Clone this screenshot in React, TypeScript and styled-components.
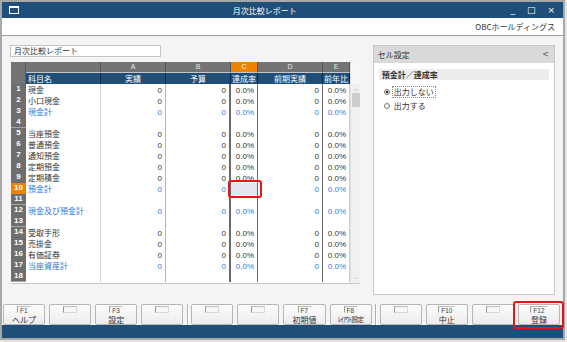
import styled, { createGlobalStyle } from "styled-components";

const GlobalStyle = createGlobalStyle`
  html, body {
    margin: 0;
    padding: 0;
    background: #e4e4e4;
  }
  body {
    font-family: "Noto Sans CJK JP", "Noto Sans", sans-serif;
    font-size: 8px;
    color: #333;
  }
  * { box-sizing: border-box; }
`;

const Window = styled.div`
  width: 565px;
  height: 340px;
  border: 2px solid #a8a8a8;
  display: flex;
  flex-direction: column;
  background: #f4f4f4;
`;

const TitleBar = styled.div`
  height: 16px;
  background: #1f4e79;
  color: #fff;
  display: flex;
  align-items: center;
  position: relative;
  padding: 0 6px;

  .title {
    flex: 1;
    text-align: center;
    font-size: 8px;
  }
`;

const WinIcon = styled.span`
  width: 10px;
  height: 8px;
  border: 1px solid #fff;
  border-top-width: 2px;
  margin-left: 1px;
`;

const WinControls = styled.div`
  display: flex;
  gap: 12px;
  align-items: center;
  font-size: 9px;
  font-family: "DejaVu Sans", sans-serif;
  padding-right: 2px;
`;

const CompanyBar = styled.div`
  height: 18px;
  background: #fff;
  border-bottom: 1px solid #9c9c9c;
  display: flex;
  align-items: center;
  justify-content: flex-end;
  padding-right: 8px;
  font-size: 8px;
  color: #333;
`;

const Body = styled.div`
  flex: 1;
  display: flex;
  padding: 9px 8px 0 8px;
  gap: 12px;
`;

const LeftCol = styled.div`
  display: flex;
  flex-direction: column;
  gap: 5px;
  width: 352px;
`;

const ReportName = styled.div`
  width: 151px;
  height: 12px;
  background: #fff;
  border: 1px solid #c4c4c4;
  padding-left: 3px;
  line-height: 10px;
  font-size: 8px;
`;

const GridFrame = styled.div`
  margin-left: 1px;
  width: 349px;
  height: 221px;
  display: flex;
  background: #fff;
  box-shadow: 0 1px 0 #c8c8c8;
`;

const Table = styled.div`
  width: 339px;
  display: flex;
  flex-direction: column;
`;

const COLS = "15px 75px 65px 65px 27px 65px 27px";

const HeaderGrid = styled.div`
  display: grid;
  grid-template-columns: ${COLS};
  grid-template-rows: 11px 11px;
`;

const Corner = styled.div`
  grid-row: span 2;
  background: #737373;
  border-right: 1px solid #5a5a5a;
`;

const LetterCell = styled.div<{ $active?: boolean }>`
  background: ${(p) => (p.$active ? "#ef8200" : "#747474")};
  color: ${(p) => (p.$active ? "#fff" : "#e8e8e8")};
  border-right: 1px solid #555;
  border-bottom: 1px solid #c8c8c8;
  font-family: "Liberation Sans", sans-serif;
  font-size: 7px;
  line-height: 10px;
  text-align: center;
`;

const TitleCell = styled.div<{ $left?: boolean }>`
  background: #1f4e79;
  color: #fff;
  border-right: 1px solid #0e2d4b;
  font-size: 8px;
  line-height: 11px;
  text-align: ${(p) => (p.$left ? "left" : "center")};
  padding-left: ${(p) => (p.$left ? "2px" : "0")};
  white-space: nowrap;
`;

const RowGrid = styled.div`
  display: grid;
  grid-template-columns: ${COLS};
  height: 11px;
`;

const NoCell = styled.div<{ $active?: boolean }>`
  background: ${(p) => (p.$active ? "#ef8200" : "#6e6e6e")};
  color: #fff;
  border-bottom: 1px solid #a3a3a3;
  font-family: "Liberation Sans", sans-serif;
  font-weight: bold;
  font-size: 8px;
  line-height: 10px;
  text-align: center;
`;

const DataCell = styled.div<{ $line: string; $w?: number; $right?: boolean; $blue?: boolean; $sel?: boolean }>`
  position: relative;
  border-right: ${(p) => p.$w ?? 1}px solid ${(p) => p.$line};
  background: ${(p) => (p.$sel ? "#e4e4ec" : "transparent")};
  color: ${(p) => (p.$blue ? "#2f7ae0" : "#333")};
  text-align: ${(p) => (p.$right ? "right" : "left")};
  padding: ${(p) => (p.$right ? "0 3px 0 0" : "0 0 0 2px")};
  font-size: 8px;
  line-height: 11px;
  white-space: nowrap;
`;

const NumText = styled.span`
  font-family: "Liberation Sans", sans-serif;
  font-size: 8px;
`;

const RedBox = styled.span<{ $t: number; $r: number; $b: number; $l: number }>`
  position: absolute;
  top: ${(p) => p.$t}px;
  right: ${(p) => p.$r}px;
  bottom: ${(p) => p.$b}px;
  left: ${(p) => p.$l}px;
  border: 2px solid #e8141a;
  border-radius: 3px;
  pointer-events: none;
  z-index: 2;
`;

const ScrollCol = styled.div`
  width: 10px;
  display: flex;
  flex-direction: column;
  background: #f0f0f0;
  border-left: 1px solid #e0e0e0;

  .head {
    height: 22px;
    background: #f6f6f6;
  }
  .track {
    flex: 1;
    display: flex;
    flex-direction: column;
    align-items: center;
  }
  .arrow {
    height: 9px;
    font-size: 6px;
    color: #a0a0a0;
    line-height: 9px;
    font-family: "DejaVu Sans", sans-serif;
  }
  .thumb {
    width: 8px;
    height: 14px;
    background: #cdcdcd;
  }
  .fill {
    flex: 1;
  }
`;

const Panel = styled.div`
  width: 183px;
  height: 250px;
  background: #fff;
  border: 1px solid #c8c8c8;
  display: flex;
  flex-direction: column;
`;

const PanelHead = styled.div`
  height: 17px;
  background: #d9d9d9;
  display: flex;
  align-items: center;
  justify-content: space-between;
  padding: 0 5px 0 4px;
  font-size: 8px;

  .chev {
    font-family: "DejaVu Sans", sans-serif;
    font-size: 8px;
    color: #555;
  }
`;

const PanelBody = styled.div`
  padding: 6px 5px;
  display: flex;
  flex-direction: column;
`;

const SectionTitle = styled.div`
  height: 11px;
  background: #ededed;
  font-size: 8px;
  font-weight: bold;
  line-height: 11px;
  padding-left: 3px;
  margin-bottom: 5px;
`;

const RadioRow = styled.div`
  display: flex;
  align-items: center;
  height: 14px;
  padding-left: 5px;
  gap: 2px;
`;

const RadioDot = styled.span<{ $on?: boolean }>`
  width: 6px;
  height: 6px;
  border-radius: 50%;
  border: 1px solid #777;
  background: ${(p) => (p.$on ? "radial-gradient(circle, #222 0 1.4px, #fff 1.6px)" : "#fff")};
`;

const RadioLabel = styled.span<{ $focus?: boolean }>`
  font-size: 8px;
  line-height: 10px;
  padding: 0 1px;
  border: 1px ${(p) => (p.$focus ? "dotted #888" : "solid transparent")};
`;

const FuncBar = styled.div`
  height: 24px;
  display: flex;
  align-items: flex-end;
  padding: 0 3px 0 1px;
`;

const KeyGroup = styled.div`
  flex: 1;
  display: flex;
  gap: 4px;
  height: 21px;
`;

const GroupDivider = styled.div`
  width: 8px;
  height: 21px;
  display: flex;
  justify-content: center;
  &::before {
    content: "";
    width: 1px;
    background: #b0b0b0;
    box-shadow: 1px 0 0 #fff;
  }
`;

const Key = styled.div`
  flex: 1;
  position: relative;
  border: 1px solid #b6b6b6;
  border-radius: 2px;
  background: linear-gradient(#fcfcfc, #ececec);
  display: flex;
  flex-direction: column;
  align-items: center;
  padding-top: 1px;
`;

const KeyTag = styled.span<{ $blank?: boolean }>`
  height: 7px;
  min-width: 14px;
  padding: 0 2px;
  font-family: "Liberation Sans", sans-serif;
  font-size: 6.5px;
  line-height: 7px;
  color: #444;
  border-left: 1px solid #999;
  border-top: 1px solid #bbb;
  border-right: 1px solid ${(p) => (p.$blank ? "#d8d8d8" : "transparent")};
  border-bottom: 1px solid ${(p) => (p.$blank ? "#d8d8d8" : "transparent")};
  background: ${(p) => (p.$blank ? "#f7f7f7" : "transparent")};
`;

const KeyLabel = styled.span<{ $narrow?: boolean }>`
  font-size: ${(p) => (p.$narrow ? "7px" : "8px")};
  letter-spacing: ${(p) => (p.$narrow ? "-0.8px" : "0")};
  line-height: 11px;
  margin-top: 1px;
  color: #333;
  white-space: nowrap;
`;

const StatusBar = styled.div`
  height: 13px;
  background: #1f4e79;
`;

type RowData = { name?: string; total?: boolean; active?: boolean };

const rows: RowData[] = [
  { name: "現金" },
  { name: "小口現金" },
  { name: "現金計", total: true },
  {},
  { name: "当座預金" },
  { name: "普通預金" },
  { name: "通知預金" },
  { name: "定期預金" },
  { name: "定期積金" },
  { name: "預金計", total: true, active: true },
  {},
  { name: "現金及び預金計", total: true },
  {},
  { name: "受取手形" },
  { name: "売掛金" },
  { name: "有価証券" },
  { name: "当座資産計", total: true },
  {},
];

const cols = [
  { letter: "", title: "科目名", line: "#d0d0d0", w: 1 },
  { letter: "A", title: "実績", line: "#b4b4b4", w: 1 },
  { letter: "B", title: "予算", line: "#6a6a6a", w: 2 },
  { letter: "C", title: "達成率", line: "#6a6a6a", w: 1 },
  { letter: "D", title: "前期実績", line: "#6a6a6a", w: 1 },
  { letter: "E", title: "前年比", line: "#d0d0d0", w: 1 },
];

const keys = [
  { f: "F1", label: "ヘルプ" },
  {},
  { f: "F3", label: "設定" },
  {},
  {},
  {},
  { f: "F7", label: "初期値" },
  { f: "F8", label: "ﾚｲｱｳﾄ設定", narrow: true },
  {},
  { f: "F10", label: "中止" },
  {},
  { f: "F12", label: "登録", mark: true },
] as { f?: string; label?: string; narrow?: boolean; mark?: boolean }[];

function renderKey(k: (typeof keys)[number], i: number) {
  return (
    <Key key={i}>
      {k.f ? <KeyTag>{k.f}</KeyTag> : <KeyTag $blank />}
      {k.label && <KeyLabel $narrow={k.narrow}>{k.label}</KeyLabel>}
      {k.mark && <RedBox $t={-4} $r={-5} $b={-5} $l={-6} />}
    </Key>
  );
}

export default function App() {
  return (
    <>
      <GlobalStyle />
      <Window>
        <TitleBar>
          <WinIcon />
          <span className="title">月次比較レポート</span>
          <WinControls>
            <span>_</span>
            <span>□</span>
            <span>×</span>
          </WinControls>
        </TitleBar>
        <CompanyBar>OBCホールディングス</CompanyBar>

        <Body>
          <LeftCol>
            <ReportName>月次比較レポート</ReportName>
            <GridFrame>
              <Table>
                <HeaderGrid>
                  <Corner />
                  {cols.map((c) => (
                    <LetterCell key={"l" + c.title} $active={c.letter === "C"}>
                      {c.letter}
                    </LetterCell>
                  ))}
                  {cols.map((c, i) => (
                    <TitleCell key={"t" + c.title} $left={i === 0}>
                      {c.title}
                    </TitleCell>
                  ))}
                </HeaderGrid>
                {rows.map((r, i) => (
                  <RowGrid key={i}>
                    <NoCell $active={r.active}>{i + 1}</NoCell>
                    {cols.map((c, ci) => {
                      const sel = r.active && ci === 3;
                      let text = "";
                      if (r.name && ci === 0) text = r.name;
                      else if (r.name && !sel) text = ci === 3 || ci === 5 ? "0.0%" : "0";
                      return (
                        <DataCell
                          key={ci}
                          $line={c.line}
                          $w={c.w}
                          $right={ci > 0}
                          $blue={r.total}
                          $sel={sel}
                        >
                          {ci === 0 ? text : <NumText>{text}</NumText>}
                          {sel && <RedBox $t={-3} $r={-5} $b={-3} $l={-3} />}
                        </DataCell>
                      );
                    })}
                  </RowGrid>
                ))}
              </Table>
              <ScrollCol>
                <div className="head" />
                <div className="track">
                  <span className="arrow">︿</span>
                  <span className="thumb" />
                  <span className="fill" />
                  <span className="arrow">﹀</span>
                </div>
              </ScrollCol>
            </GridFrame>
          </LeftCol>

          <Panel>
            <PanelHead>
              <span>セル設定</span>
              <span className="chev">&lt;</span>
            </PanelHead>
            <PanelBody>
              <SectionTitle>預金計／達成率</SectionTitle>
              <RadioRow>
                <RadioDot $on />
                <RadioLabel $focus>出力しない</RadioLabel>
              </RadioRow>
              <RadioRow>
                <RadioDot />
                <RadioLabel>出力する</RadioLabel>
              </RadioRow>
            </PanelBody>
          </Panel>
        </Body>

        <FuncBar>
          <KeyGroup>{keys.slice(0, 4).map((k, i) => renderKey(k, i))}</KeyGroup>
          <GroupDivider />
          <KeyGroup>{keys.slice(4, 8).map((k, i) => renderKey(k, i + 4))}</KeyGroup>
          <GroupDivider />
          <KeyGroup>{keys.slice(8, 12).map((k, i) => renderKey(k, i + 8))}</KeyGroup>
        </FuncBar>
        <StatusBar />
      </Window>
    </>
  );
}
